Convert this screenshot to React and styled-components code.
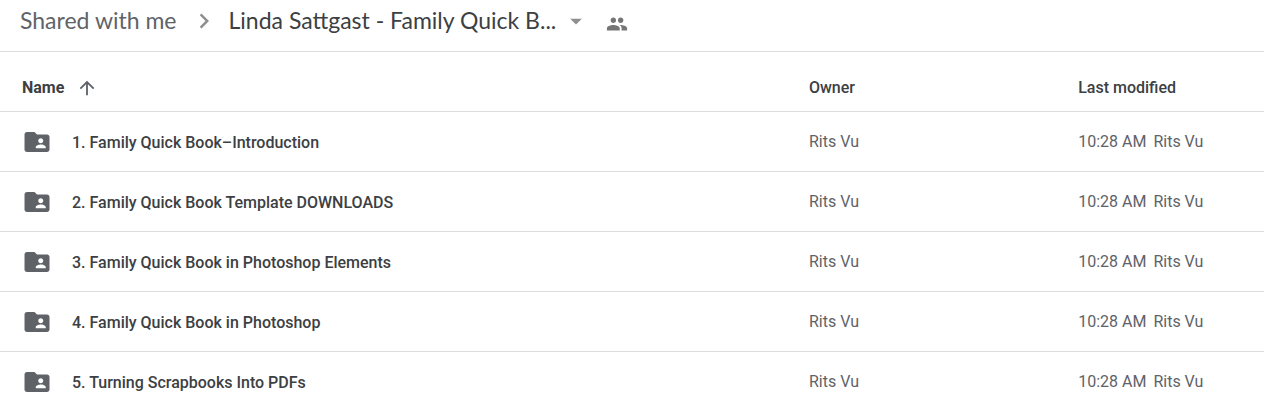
import React from 'react';
import styled, { createGlobalStyle } from 'styled-components';
import { MdArrowDropDown, MdArrowUpward, MdChevronRight, MdFolderShared, MdPeople } from 'react-icons/md';

const GlobalStyle = createGlobalStyle`
    * {
        box-sizing: border-box;
    }
    html {
        overflow: hidden;
    }
    body {
        margin: 0;
        background: #fff;
        color: #3c4043;
        font-family: Roboto, 'Liberation Sans', sans-serif;
        font-size: 16px;
        line-height: 20px;
    }
`;

const Breadcrumbs = styled.nav`
    display: flex;
    align-items: center;
    height: 52px;
    padding: 0 20px 12px;
    border-bottom: 1px solid #dadce0;
    font-family: Lato, Roboto, sans-serif;
    font-size: 23px;
    line-height: 28px;
    white-space: nowrap;
`;

const CrumbLink = styled.a`
    color: #5f6368;
    text-decoration: none;
`;

const Separator = styled(MdChevronRight)`
    flex: none;
    margin: 2px 10px 0 12px;
    color: #8f8f8f;
    font-size: 30px;
`;

const CurrentFolder = styled.button`
    display: flex;
    align-items: center;
    gap: 6px;
    padding: 0;
    border: 0;
    background: none;
    color: #3c4043;
    font: inherit;

    svg {
        margin-top: 2px;
        color: #8f8f8f;
        font-size: 28px;
    }
`;

const ShareButton = styled.button`
    display: flex;
    margin-left: 16px;
    padding: 8px 0 0;
    border: 0;
    background: none;
    color: #757575;
    font-size: 22px;
`;

const FileTable = styled.table`
    width: 100%;
    table-layout: fixed;
    border-spacing: 0;
`;

const HeadCell = styled.th`
    width: ${(props) => props.$width || 'auto'};
    height: 60px;
    padding: 12px 0 0 ${(props) => (props.$first ? '22px' : '0')};
    border-bottom: 1px solid #dadce0;
    font-weight: ${(props) => (props.$first ? 700 : 500)};
    text-align: left;
`;

const SortButton = styled.button`
    display: flex;
    align-items: center;
    gap: 12px;
    padding: 0;
    border: 0;
    background: none;
    color: inherit;
    font: inherit;

    svg {
        color: #5f6368;
        font-size: 22px;
    }
`;

const Cell = styled.td`
    height: 60px;
    padding: 0;
    border-bottom: 1px solid #dadce0;
    color: #5f6368;
    white-space: nowrap;
`;

const FileName = styled.div`
    display: flex;
    align-items: center;
    gap: 20px;
    padding: 0 0 0 22px;
    color: #3c4043;
    font-weight: 500;

    span {
        padding-top: 2px;
    }

    svg {
        flex: none;
        color: #5f6368;
        font-size: 30px;
    }
`;

const Modified = styled.div`
    display: flex;
    gap: 7px;
`;

const folders = [
    '1. Family Quick Book–Introduction',
    '2. Family Quick Book Template DOWNLOADS',
    '3. Family Quick Book in Photoshop Elements',
    '4. Family Quick Book in Photoshop',
    '5. Turning Scrapbooks Into PDFs',
];

function FolderRow({ name }) {
    return (
        <tr>
            <Cell>
                <FileName>
                    <MdFolderShared />
                    <span>{name}</span>
                </FileName>
            </Cell>
            <Cell>Rits Vu</Cell>
            <Cell>
                <Modified>
                    <span>10:28 AM</span>
                    <span>Rits Vu</span>
                </Modified>
            </Cell>
        </tr>
    );
}

function App() {
    return (
        <>
            <GlobalStyle />
            <Breadcrumbs>
                <CrumbLink href="#shared">Shared with me</CrumbLink>
                <Separator />
                <CurrentFolder type="button">
                    <span>Linda Sattgast - Family Quick B...</span>
                    <MdArrowDropDown />
                </CurrentFolder>
                <ShareButton type="button" aria-label="Manage people">
                    <MdPeople />
                </ShareButton>
            </Breadcrumbs>
            <FileTable>
                <thead>
                    <tr>
                        <HeadCell $first $width="64%">
                            <SortButton type="button">
                                Name
                                <MdArrowUpward />
                            </SortButton>
                        </HeadCell>
                        <HeadCell $width="21.3%">Owner</HeadCell>
                        <HeadCell>Last modified</HeadCell>
                    </tr>
                </thead>
                <tbody>
                    {folders.map((name) => (
                        <FolderRow key={name} name={name} />
                    ))}
                </tbody>
            </FileTable>
        </>
    );
}

export default App;
